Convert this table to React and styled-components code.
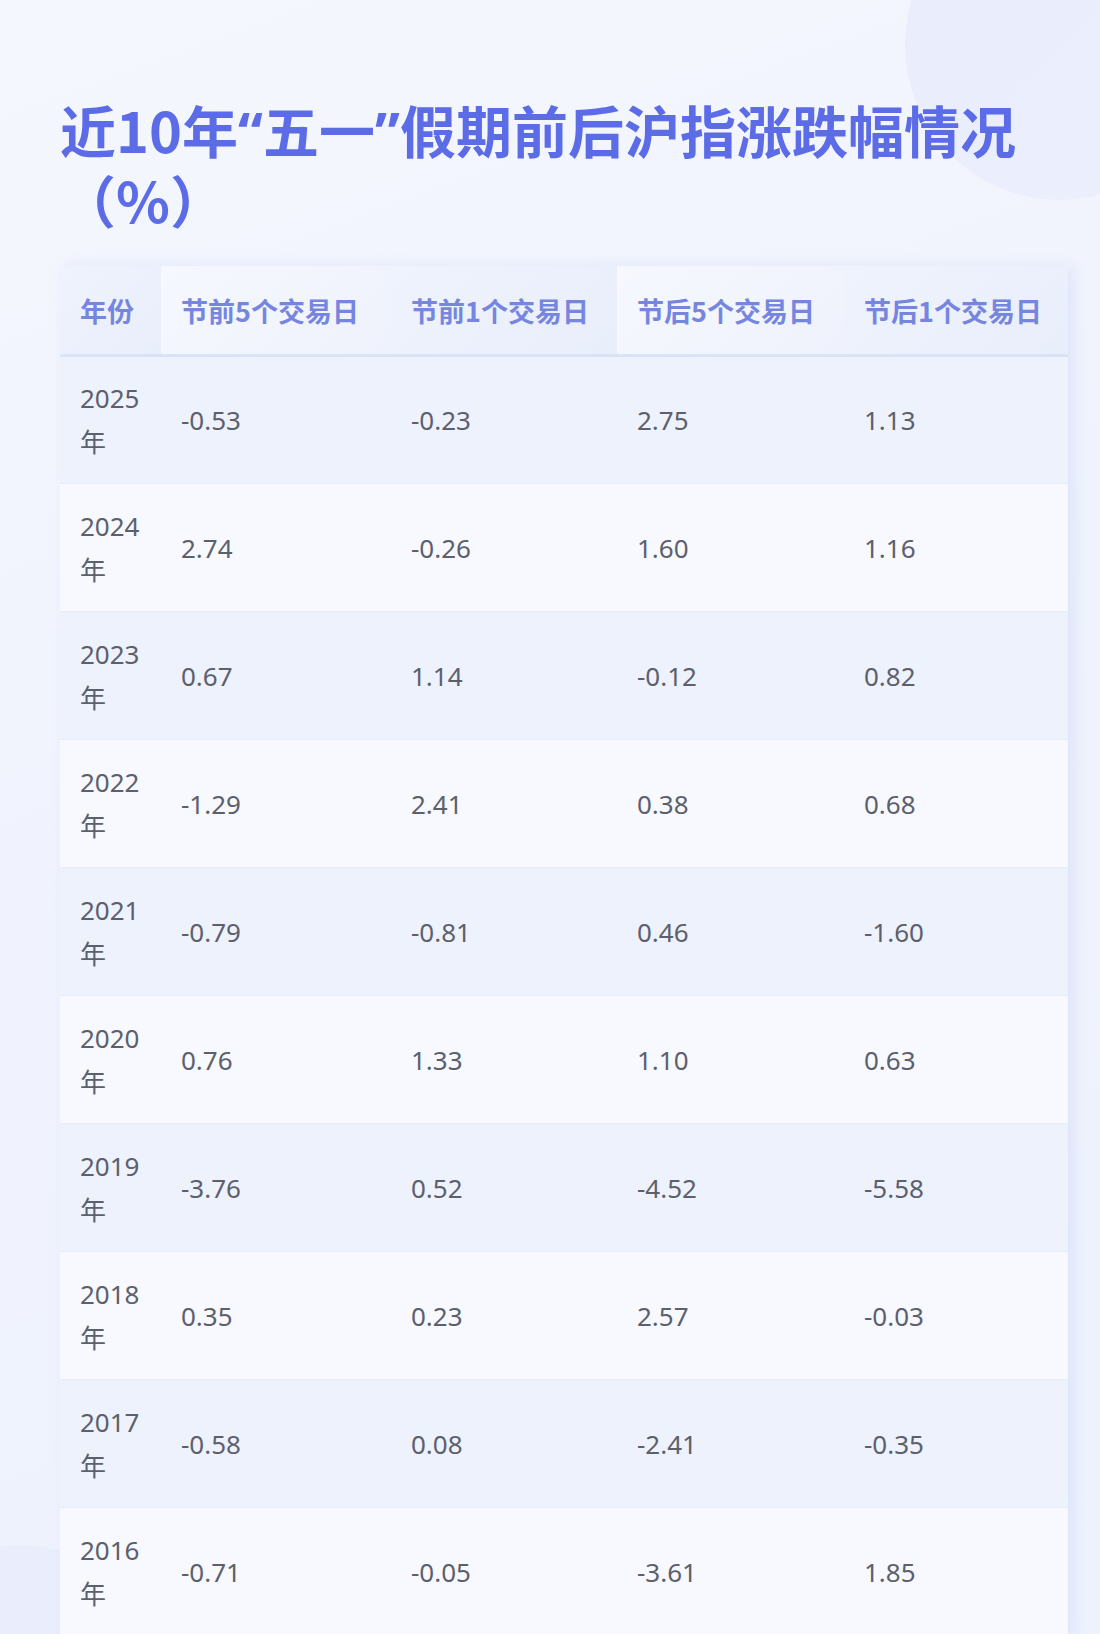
import React from 'react'
import styled, { createGlobalStyle } from 'styled-components'

const GlobalStyle = createGlobalStyle`
  html, body {
    margin: 0;
    padding: 0;
  }
  body {
    font-family: "Noto Sans", "Noto Sans CJK SC", sans-serif;
    background: #f0f3fd;
  }
`

const rows = [
  ['2025', '-0.53', '-0.23', '2.75', '1.13'],
  ['2024', '2.74', '-0.26', '1.60', '1.16'],
  ['2023', '0.67', '1.14', '-0.12', '0.82'],
  ['2022', '-1.29', '2.41', '0.38', '0.68'],
  ['2021', '-0.79', '-0.81', '0.46', '-1.60'],
  ['2020', '0.76', '1.33', '1.10', '0.63'],
  ['2019', '-3.76', '0.52', '-4.52', '-5.58'],
  ['2018', '0.35', '0.23', '2.57', '-0.03'],
  ['2017', '-0.58', '0.08', '-2.41', '-0.35'],
  ['2016', '-0.71', '-0.05', '-3.61', '1.85'],
]

const heads = ['年份', '节前5个交易日', '节前1个交易日', '节后5个交易日', '节后1个交易日']
const widths = [101, 230, 226, 227, 224]

const App = () => {
  return (
    <Page>
      <GlobalStyle />
      <Circle $top={-110} $left={905} $size={310} />
      <Circle $top={1545} $left={-130} $size={300} />
      <Title>
        <Line>近10年<Quote>“</Quote>五一<Quote>”</Quote>假期前后沪指涨跌幅情况</Line>
        <Line>（%）</Line>
      </Title>

      <Table>
        <colgroup>
          {widths.map((w, i) => <col key={i} style={{ width: w }} />)}
        </colgroup>
        <thead>
          <tr>
            {heads.map((h, i) => (
              <HeadCell key={h} $dark={i % 2 === 0}>{h}</HeadCell>
            ))}
          </tr>
        </thead>
        <tbody>
          {rows.map((r, i) => (
            <Row key={r[0]} $alt={i % 2 === 1}>
              <Cell>{r[0]}年</Cell>
              {r.slice(1).map((v, j) => <Cell key={j}>{v}</Cell>)}
            </Row>
          ))}
        </tbody>
      </Table>
    </Page>
  )
}

const Page = styled.div`
  position: relative;
  overflow: hidden;
  width: 1100px;
  height: 1634px;
  box-sizing: border-box;
  padding: 95px 32px 0 60px;
  background: linear-gradient(160deg, #f5f7fe 0%, #f0f3fd 45%, #eef2fd 100%);
`

const Circle = styled.div`
  position: absolute;
  top: ${p => p.$top}px;
  left: ${p => p.$left}px;
  width: ${p => p.$size}px;
  height: ${p => p.$size}px;
  border-radius: 50%;
  background: linear-gradient(135deg, #e9edfc 0%, #eceffc 100%);
  z-index: 0;
`

const Title = styled.h1`
  position: relative;
  z-index: 1;
  margin: 0 0 33px;
  font-family: "Noto Sans CJK SC", sans-serif;
  font-size: 56px;
  line-height: 68px;
  font-weight: 700;
  color: #5c6ce7;
`

const Line = styled.div`
  white-space: nowrap;
`

const Quote = styled.span`
  font-family: "Noto Sans", sans-serif;
  font-weight: 700;
`

const Table = styled.table`
  position: relative;
  z-index: 1;
  width: 1008px;
  table-layout: fixed;
  border-collapse: collapse;
  box-shadow: 6px 0 14px rgba(200, 212, 245, 0.45);
`

const HeadCell = styled.th`
  height: 88px;
  padding: 0 20px;
  text-align: left;
  font-family: "Noto Sans CJK SC", sans-serif;
  font-size: 27px;
  font-weight: 700;
  color: #7686df;
  white-space: nowrap;
  border-bottom: 3px solid #dbe3f7;
  background: ${p => p.$dark
    ? 'linear-gradient(135deg, #eff3fd 0%, #e9eefb 100%)'
    : 'linear-gradient(135deg, #f6f8fe 0%, #eff2fc 100%)'};
`

const Row = styled.tr`
  background: ${p => (p.$alt ? '#f7f9fe' : '#eef2fd')};
  border-bottom: 1px solid #e6ebf8;
`

const Cell = styled.td`
  height: 128px;
  box-sizing: border-box;
  padding: 19px 20px;
  font-family: "Noto Sans", "Noto Sans CJK SC", sans-serif;
  font-size: 26px;
  line-height: 44px;
  color: #5c606d;
  vertical-align: middle;
`

export default App
